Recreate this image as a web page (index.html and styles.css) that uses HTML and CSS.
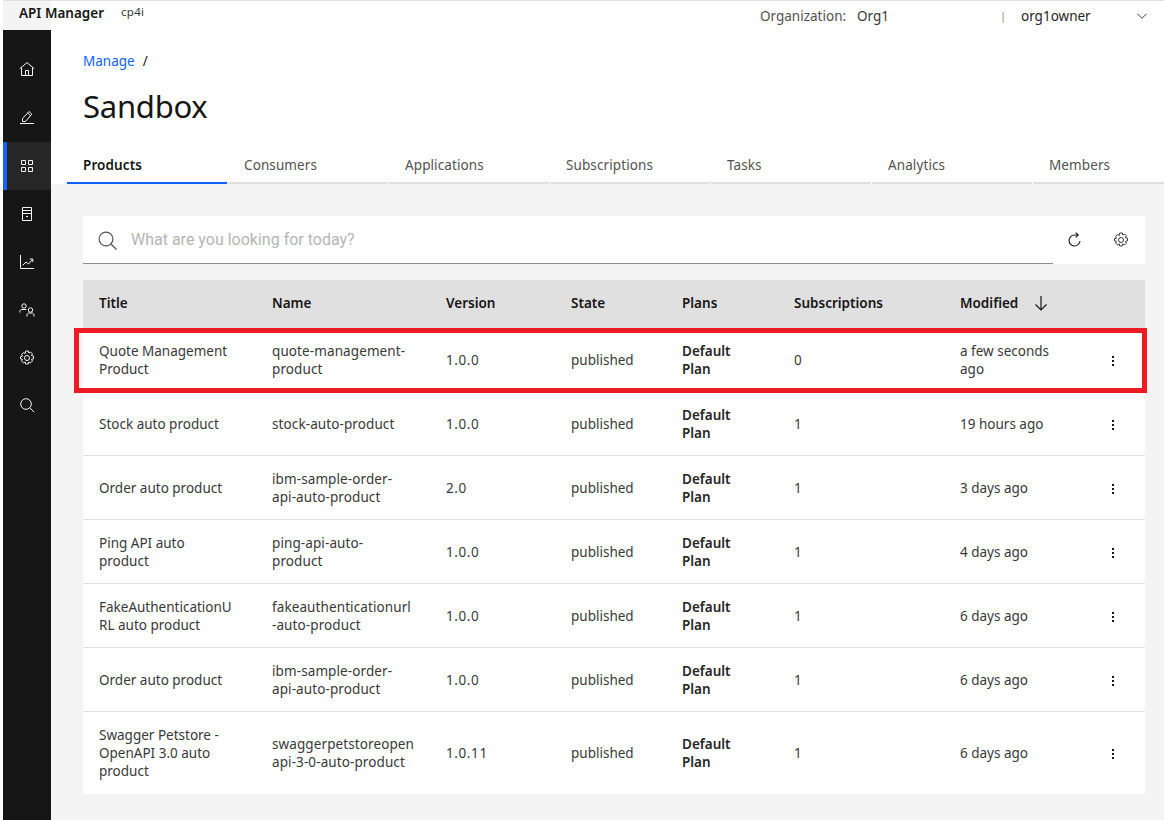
FILE: index.html
```html
<!DOCTYPE html>
<html lang="en">
<head>
<meta charset="utf-8">
<title>API Manager</title>
<link rel="stylesheet" href="styles.css">
</head>
<body>
<header class="topbar">
  <div class="brand"><span class="brand-name">API Manager</span><span class="brand-tag">cp4i</span></div>
  <div class="org"><span class="org-label">Organization:</span><span class="org-name">Org1</span></div>
  <span class="sep">|</span>
  <span class="user">org1owner</span>
  <svg class="chev" width="12" height="12" viewBox="0 0 12 12"><path d="M1.500 3.800 6 8.300l4.500-4.500" fill="none" stroke="#393939" stroke-width="1"/></svg>
</header>
<div class="shell">
  <nav class="sidenav">
    <a class="nav-item"><svg width="16" height="16" viewBox="0 1 16 16" fill="none" stroke="#f4f4f4"><path d="M.8 7.600 8 1.600l7.200 6M2.500 6.500v8h11v-8M6.500 14.500v-5h3v5"/></svg></a>
    <a class="nav-item"><svg width="16" height="16" viewBox="0 1 16 16" fill="none" stroke="#f4f4f4"><path d="M1 14.500h14M3.500 12.500v-3l6.500-7 2.800 2.700-6.300 7.300zM8.700 4l2.800 2.700"/></svg></a>
    <a class="nav-item active"><svg width="16" height="16" viewBox="0 0 16 16" fill="none" stroke="#f4f4f4"><path d="M2.500 2.500h4v4h-4zM9.500 2.500h4v4h-4zM2.500 9.500h4v4h-4zM9.500 9.500h4v4h-4z"/></svg></a>
    <a class="nav-item"><svg width="16" height="16" viewBox="0 0 16 16" fill="none" stroke="#f4f4f4"><path d="M3.500 1.500h9v13h-9zM3.500 4.500h9M3.500 7.500h9M7 10.500h2"/></svg></a>
    <a class="nav-item"><svg width="16" height="16" viewBox="0 0 16 16" fill="none" stroke="#f4f4f4"><path d="M1.500 1v13.500H15M3.500 11.500l3.500-3.500 2.500 2 4-4.500M10.800 5h3v3"/></svg></a>
    <a class="nav-item"><svg width="16" height="16" viewBox="0 0 16 16" fill="none" stroke="#f4f4f4"><circle cx="5" cy="4" r="2.200"/><path d="M.8 10.500V9.500c0-1 1-2 2-2h4.500"/><circle cx="11.500" cy="8" r="2.200"/><path d="M8 14.500v-1.500c0-1 1-2 2-2h3c1 0 2 1 2 2v1.500"/></svg></a>
    <a class="nav-item"><svg width="16" height="16" viewBox="0 0 16 16" fill="none" stroke="#f4f4f4"><circle cx="8" cy="8" r="2.500"/><path d="M6.700 1h2.600l.5 2 1.800-.9 1.800 1.800-.9 1.800 2 .5v2.600l-2 .5.900 1.800-1.800 1.800-1.800-.9-.5 2H6.700l-.5-2-1.800.9-1.800-1.800.9-1.800-2-.5V6.700l2-.5-.9-1.800 1.800-1.800 1.800.9z"/></svg></a>
    <a class="nav-item"><svg width="16" height="16" viewBox="0 1 16 16" fill="none" stroke="#f4f4f4"><circle cx="7" cy="7" r="5.300"/><path d="m10.800 10.800 4.400 4.400"/></svg></a>
  </nav>
  <main class="main">
    <section class="page-head">
      <div class="crumbs"><a class="crumb-link">Manage</a><span class="crumb-sep">/</span></div>
      <h1 class="title">Sandbox</h1>
      <div class="tabs">
        <a class="tab on">Products</a>
        <a class="tab">Consumers</a>
        <a class="tab">Applications</a>
        <a class="tab">Subscriptions</a>
        <a class="tab">Tasks</a>
        <a class="tab">Analytics</a>
        <a class="tab last">Members</a>
      </div>
    </section>
    <section class="content">
      <div class="toolbar">
        <div class="search">
          <svg width="20" height="20" viewBox="0 0 20 20" fill="none" stroke="#525252" stroke-width="1.200"><circle cx="9" cy="9" r="6.900"/><path d="m14 14 5.500 5.500"/></svg>
          <span class="placeholder">What are you looking for today?</span>
        </div>
        <button class="tool-btn"><svg width="16" height="16" viewBox="0 0 16 16" fill="none" stroke="#161616" stroke-width="1.100"><path d="M13 9a5.500 5.500 0 1 1-5.500-6H11M8.700.7 11.200 3 8.700 5.300"/></svg></button>
        <button class="tool-btn"><svg width="16" height="16" viewBox="0 0 16 16" fill="none" stroke="#393939"><circle cx="8" cy="8" r="2.500"/><path d="M6.700 1h2.600l.5 2 1.800-.9 1.800 1.800-.9 1.800 2 .5v2.600l-2 .5.900 1.800-1.800 1.800-1.800-.9-.5 2H6.700l-.5-2-1.800.9-1.800-1.800.9-1.800-2-.5V6.700l2-.5-.9-1.800 1.800-1.800 1.800.9z"/></svg></button>
      </div>
      <div class="grid">
        <div class="row head">
          <div>Title</div><div>Name</div><div>Version</div><div>State</div><div>Plans</div><div>Subscriptions</div>
          <div class="sort">Modified<svg width="16" height="16" viewBox="0 0 16 16" fill="none" stroke="#161616" stroke-width="1.200"><path d="M8 1v14M2.500 9.500 8 15l5.500-5.500"/></svg></div><div></div>
        </div>
        <div class="row"><div>Quote Management<br>Product</div><div class="name">quote-management-<br>product</div><div class="ver">1.0.0</div><div>published</div><div class="plan">Default<br>Plan</div><div>0</div><div>a few seconds<br>ago</div><div class="more"><i></i><i></i><i></i></div></div>
        <div class="row"><div>Stock auto product</div><div class="name">stock-auto-product</div><div class="ver">1.0.0</div><div>published</div><div class="plan">Default<br>Plan</div><div>1</div><div>19 hours ago</div><div class="more"><i></i><i></i><i></i></div></div>
        <div class="row"><div>Order auto product</div><div class="name">ibm-sample-order-<br>api-auto-product</div><div class="ver">2.0</div><div>published</div><div class="plan">Default<br>Plan</div><div>1</div><div>3 days ago</div><div class="more"><i></i><i></i><i></i></div></div>
        <div class="row"><div>Ping API auto<br>product</div><div class="name">ping-api-auto-<br>product</div><div class="ver">1.0.0</div><div>published</div><div class="plan">Default<br>Plan</div><div>1</div><div>4 days ago</div><div class="more"><i></i><i></i><i></i></div></div>
        <div class="row"><div>FakeAuthenticationU<br>RL auto product</div><div class="name">fakeauthenticationurl<br>-auto-product</div><div class="ver">1.0.0</div><div>published</div><div class="plan">Default<br>Plan</div><div>1</div><div>6 days ago</div><div class="more"><i></i><i></i><i></i></div></div>
        <div class="row"><div>Order auto product</div><div class="name">ibm-sample-order-<br>api-auto-product</div><div class="ver">1.0.0</div><div>published</div><div class="plan">Default<br>Plan</div><div>1</div><div>6 days ago</div><div class="more"><i></i><i></i><i></i></div></div>
        <div class="row tall"><div>Swagger Petstore -<br>OpenAPI 3.0 auto<br>product</div><div class="name">swaggerpetstoreopen<br>api-3-0-auto-product</div><div class="ver">1.0.11</div><div>published</div><div class="plan">Default<br>Plan</div><div>1</div><div>6 days ago</div><div class="more"><i></i><i></i><i></i></div></div>
        <div class="highlight"></div>
      </div>
    </section>
  </main>
</div>
</body>
</html>
```
FILE: styles.css
```css
* { box-sizing: border-box; }
html, body { margin: 0; height: 100%; }
body {
  width: 1164px;
  height: 820px;
  overflow: hidden;
  background: #fff;
  color: #393939;
  font-family: "Noto Sans", "Liberation Sans", sans-serif;
  font-size: 13.5px;
  line-height: 18px;
}
.topbar {
  height: 30px;
  margin-left: 3px;
  border-top: 1px solid #e0e0e0;
  display: flex;
  align-items: flex-start;
  background: #fff;
}
.brand {
  width: 117px;
  padding: 3px 0 0 16px;
  display: flex;
  background: linear-gradient(to right, #f4f4f4 48px, #fff 48px);
  height: 29px;
  flex: none;
  white-space: nowrap;
}
.brand-name { font-weight: 600; color: #161616; font-size: 13.5px; }
.brand-tag { font-size: 11.5px; margin-left: 17px; margin-top: -1px; color: #393939; letter-spacing: .3px; }
.org { margin-left: 640px; padding-top: 6px; display: flex; width: 242px; flex: none; }
.org-label { width: 97px; color: #525252; }
.org-name { color: #393939; }
.sep { padding-top: 6px; width: 19px; flex: none; color: #8d8d8d; font-size: 11px; margin-left: -2px; margin-right: 2px; }
.user { padding-top: 6px; width: 114px; flex: none; color: #262626; }
.chev { margin-top: 9px; flex: none; margin-left: 1px; }
.shell { display: flex; height: 790px; margin-left: 3px; }
.sidenav {
  width: 48px;
  flex: none;
  background: #161616;
  padding-top: 16px;
  display: flex;
  flex-direction: column;
}
.nav-item {
  height: 48px;
  flex: none;
  display: flex;
  align-items: center;
  justify-content: center;
}
.nav-item.active { background: #262626; border-left: 4px solid #0f62fe; padding-right: 4px; }
.main { flex: 1; display: flex; flex-direction: column; min-width: 0; background: #f4f4f4; }
.page-head { background: #fff; height: 154px; padding: 22px 0 0 16px; }
.crumbs { padding-left: 16px; display: flex; height: 18px; }
.crumb-link { color: #0f62fe; }
.crumb-sep { margin-left: 8px; color: #161616; }
.title {
  margin: 16px 0 0;
  padding-left: 16px;
  font-size: 31px;
  line-height: 40px;
  font-weight: 400;
  letter-spacing: -.25px;
  color: #161616;
}
.tabs { display: flex; gap: 1px; margin-top: 26px; }
.tab {
  width: 160px;
  height: 32px;
  flex: none;
  padding: 4px 0 0 16px;
  border-bottom: 2px solid #e0e0e0;
  color: #525252;
  letter-spacing: .1px;
}
.tab.on { color: #161616; font-weight: 600; border-bottom-color: #0f62fe; }
.tab.last { width: 131px; }
.content { flex: 1; padding: 32px 19px 0 32px; }
.toolbar { display: flex; height: 48px; background: #fff; align-items: center; margin-bottom: 16px; }
.search {
  width: 970px;
  height: 48px;
  flex: none;
  border-bottom: 1px solid #8d8d8d;
  display: flex;
  align-items: center;
  padding-left: 14px;
}
.placeholder { margin-left: 14px; font-family: Roboto, sans-serif; font-size: 16px; color: #b5b5b5; }
.tool-btn {
  width: 46px;
  height: 48px;
  flex: none;
  padding: 0 2px 0 0;
  border: 0;
  background: none;
  display: flex;
  align-items: center;
  justify-content: center;
}
.grid { position: relative; background: #fff; }
.row {
  display: grid;
  grid-template-columns: 173px 174px 125px 111px 112px 166px 129px 1fr;
  height: 64px;
  border-bottom: 1px solid #e0e0e0;
  align-items: center;
  padding-top: 1px;
}
.row > div { padding-left: 16px; white-space: nowrap; }
.row > .name { letter-spacing: .1px; }
.row > .ver { letter-spacing: .6px; }
.row.tall { height: 82px; border-bottom: 0; padding-top: 0; }
.row.head {
  height: 48px;
  background: #e0e0e0;
  border-bottom: 0;
  font-weight: 600;
  color: #161616;
  padding: 0 0 2px;
}
.sort { display: flex; align-items: center; gap: 15px; }
.plan { font-weight: 600; color: #262626; }
.row > .more { display: flex; flex-direction: column; align-items: center; gap: 2px; padding: 1px 0 0; width: 16px; margin-left: 32px; }
.more i { width: 2px; height: 2px; background: #161616; display: block; }
.highlight {
  position: absolute;
  left: -9px;
  right: -2px;
  top: 48px;
  height: 65px;
  border: 5px solid #ed1c24;
  pointer-events: none;
}
```
